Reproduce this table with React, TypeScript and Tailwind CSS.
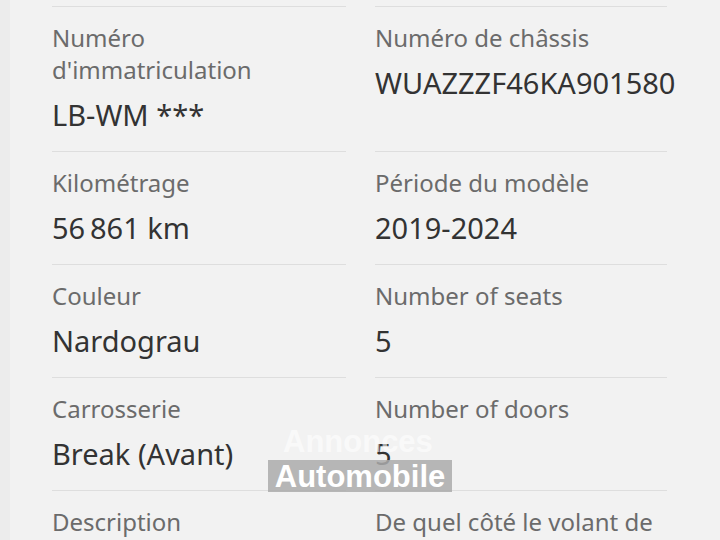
import React from "react";

type Spec = { label: string; value?: string };

const rows: [Spec, Spec][] = [
  [
    { label: "Numéro d'immatriculation", value: "LB-WM ***" },
    { label: "Numéro de châssis", value: "WUAZZZF46KA901580" },
  ],
  [
    { label: "Kilométrage", value: "56\u202F861 km" },
    { label: "Période du modèle", value: "2019-2024" },
  ],
  [
    { label: "Couleur", value: "Nardograu" },
    { label: "Number of seats", value: "5" },
  ],
  [
    { label: "Carrosserie", value: "Break (Avant)" },
    { label: "Number of doors", value: "5" },
  ],
  [
    { label: "Description" },
    { label: "De quel côté le volant de" },
  ],
];

const Cell: React.FC<{ spec: Spec }> = ({ spec }) => (
  <div className="border-t border-[#dedede] pt-[15px] pb-[20px]">
    <div className="text-[24px] leading-8 text-[#6b6b6b]">{spec.label}</div>
    {spec.value && (
      <div className="mt-[13px] text-[29px] leading-8 text-[#333333]">{spec.value}</div>
    )}
  </div>
);

export default function App() {
  return (
    <div className="relative w-[720px] h-[540px] overflow-hidden bg-[#f2f2f2] font-['Noto_Sans',sans-serif]">
      <div className="absolute left-0 top-0 bottom-0 w-[10px] bg-[#ececec]" />
      <div className="pt-[6px] pl-[52px] grid grid-cols-[294px_292px] gap-x-[29px]">
        {rows.map(([a, b], i) => (
          <React.Fragment key={i}>
            <Cell spec={a} />
            <Cell spec={b} />
          </React.Fragment>
        ))}
      </div>

      {/* watermark */}
      <div className="absolute left-[283px] top-[426px] text-[31px] font-bold leading-none text-white/60 font-['Liberation_Sans',sans-serif]">
        Annonces
      </div>
      <div className="absolute left-[268px] top-[460px] w-[184px] h-[32px] bg-[#acacac]/85 flex items-center justify-center text-[31px] font-bold leading-none text-white font-['Liberation_Sans',sans-serif]">
        Automobile
      </div>
    </div>
  );
}
